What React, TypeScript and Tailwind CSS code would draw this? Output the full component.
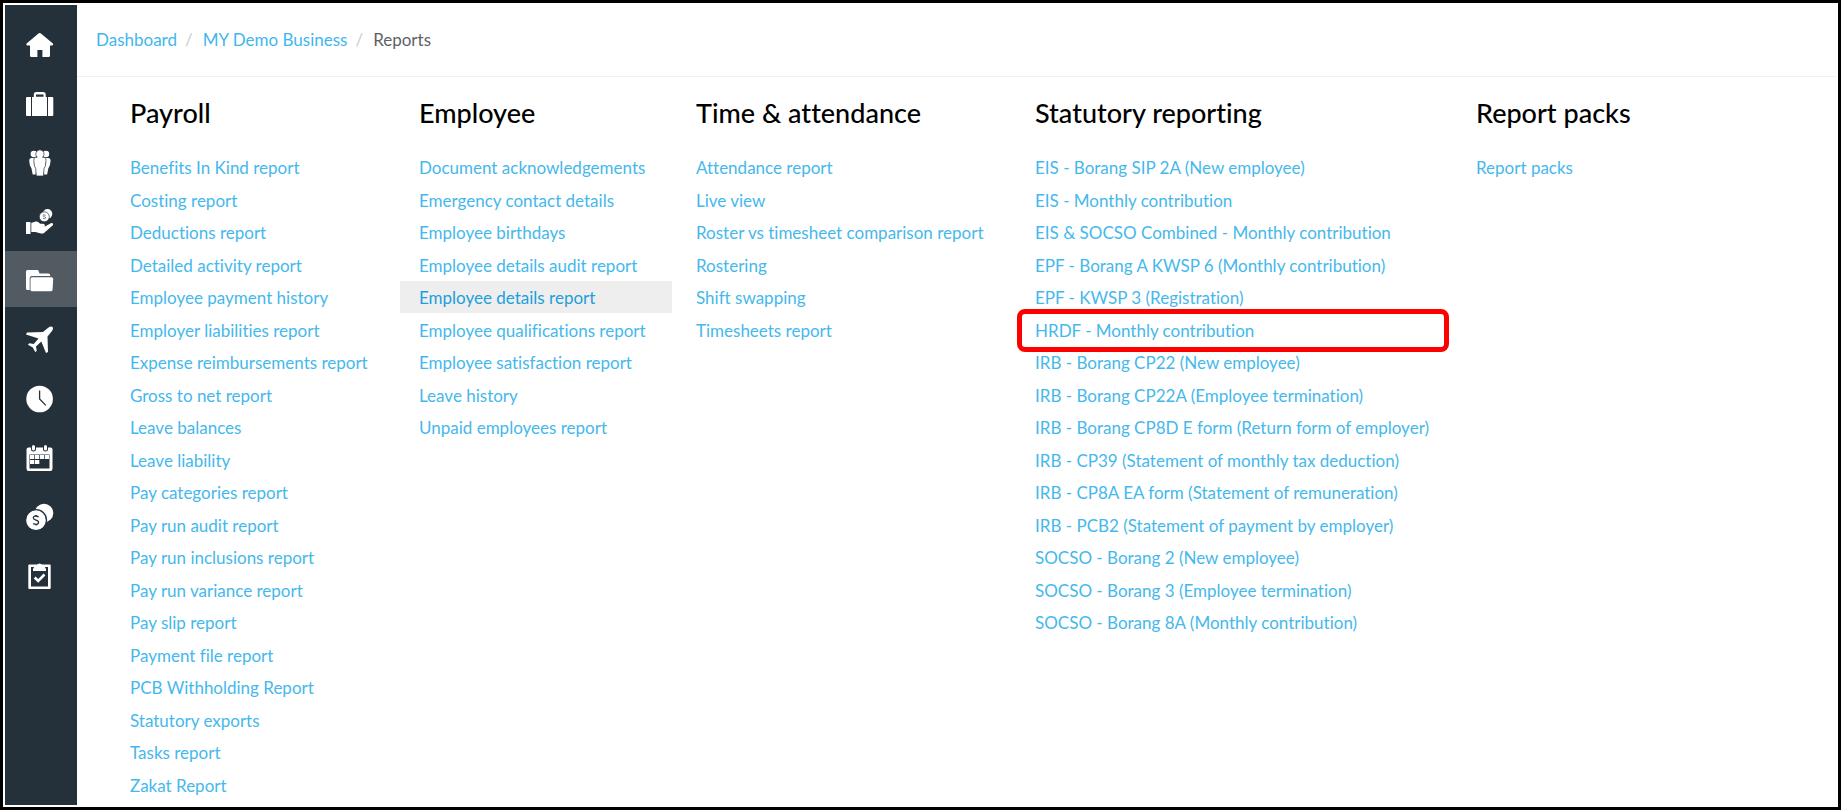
import React from 'react';

interface ReportGroup {
  title: string;
  reports: string[];
}

const ACTIVE_REPORT = 'Employee details report';
const MARKED_REPORT = 'HRDF - Monthly contribution';

const groups: ReportGroup[] = [
  {
    title: 'Payroll',
    reports: [
      'Benefits In Kind report',
      'Costing report',
      'Deductions report',
      'Detailed activity report',
      'Employee payment history',
      'Employer liabilities report',
      'Expense reimbursements report',
      'Gross to net report',
      'Leave balances',
      'Leave liability',
      'Pay categories report',
      'Pay run audit report',
      'Pay run inclusions report',
      'Pay run variance report',
      'Pay slip report',
      'Payment file report',
      'PCB Withholding Report',
      'Statutory exports',
      'Tasks report',
      'Zakat Report',
    ],
  },
  {
    title: 'Employee',
    reports: [
      'Document acknowledgements',
      'Emergency contact details',
      'Employee birthdays',
      'Employee details audit report',
      'Employee details report',
      'Employee qualifications report',
      'Employee satisfaction report',
      'Leave history',
      'Unpaid employees report',
    ],
  },
  {
    title: 'Time & attendance',
    reports: [
      'Attendance report',
      'Live view',
      'Roster vs timesheet comparison report',
      'Rostering',
      'Shift swapping',
      'Timesheets report',
    ],
  },
  {
    title: 'Statutory reporting',
    reports: [
      'EIS - Borang SIP 2A (New employee)',
      'EIS - Monthly contribution',
      'EIS & SOCSO Combined - Monthly contribution',
      'EPF - Borang A KWSP 6 (Monthly contribution)',
      'EPF - KWSP 3 (Registration)',
      'HRDF - Monthly contribution',
      'IRB - Borang CP22 (New employee)',
      'IRB - Borang CP22A (Employee termination)',
      'IRB - Borang CP8D E form (Return form of employer)',
      'IRB - CP39 (Statement of monthly tax deduction)',
      'IRB - CP8A EA form (Statement of remuneration)',
      'IRB - PCB2 (Statement of payment by employer)',
      'SOCSO - Borang 2 (New employee)',
      'SOCSO - Borang 3 (Employee termination)',
      'SOCSO - Borang 8A (Monthly contribution)',
    ],
  },
  {
    title: 'Report packs',
    reports: ['Report packs'],
  },
];

const navItems = [
  {
    label: 'Home',
    icon: (
      <path d="M12.8 2.3q.9-.7 1.8 0l12.3 10.3q.8 1.6-.6 2H24v9.9q0 1.5-1.5 1.5H16.400v-7h-5v7H5.500Q4 26 4 24.500v-9.900H1.200q-1.500-.4-.6-2z" />
    ),
  },
  {
    label: 'Business',
    icon: (
      <>
        <path d="M1 7h4v19H1q-1 0-1-1V8q0-1 1-1zM22 7h4.300q1 0 1 1v17q0 1-1 1H22z" />
        <path d="M6 7h1.800V4.500Q7.800 2 10.300 2h6.900q2.500 0 2.500 2.500V7H21v19H6zm4-.2h7.500V4.500H10z" />
      </>
    ),
  },
  {
    label: 'Employees',
    icon: (
      <>
        <circle cx="7.900" cy="5" r="3.300" />
        <circle cx="19.900" cy="5" r="3.300" />
        <path d="M5.200 9h4l-1 6 2 5-.5 5.500h-3L5.500 19.500Q3.200 16 3.200 11.500 3.200 9 5.200 9zM18.600 9h4q2 0 2 2.500 0 4.500-2.300 8l-1.200 6h-3l-.5-5.500 2-5z" />
        <path
          d="M13.900.8a4.300 4.300 0 0 1 2.700 7.500h1.600q2 .2 1.800 3l-.6 5.900-1.300 2-.6 7.800h-7.200l-.6-7.800-1.300-2-.6-5.900q-.2-2.800 1.800-3h1.600A4.300 4.300 0 0 1 13.900.8z"
          stroke="#25313a"
          strokeWidth=".7"
        />
      </>
    ),
  },
  {
    label: 'Pay run',
    icon: (
      <>
        <path d="M0 14h4.500v12H0zM5.300 15l4.200-1.500q1.800-.4 3.200 1l1.600 1.300h2.800q2.200.5 1.800 2l-.4 1 6.800-3.700q2.200-.2 1.800 1.800l-8.800 7.800q-1.500 1.200-3.500.8L9.500 24H5.300z" />
        <circle cx="21.500" cy="5.800" r="4.800" />
        <circle cx="18.300" cy="8.800" r="5" stroke="#25313a" strokeWidth=".7" />
        <path d="M19.700 7.300q-2.500-1.200-2.700.2 0 .9 1.300 1.200 1.500.4 1.400 1.300-.3 1.300-2.900.3" fill="none" stroke="#25313a" strokeWidth=".6" />
      </>
    ),
  },
  {
    label: 'Reports',
    icon: (
      <>
        <path d="M1.500 3h9.700q1.200 0 1.500 1.200L13.500 6.500h9q1.700 0 1.700 2V9H6Q3.700 9 3.700 11.300V23H1.500Q0 23 0 21.500v-17Q0 3 1.500 3z" />
        <path d="M6 10.300h19.500q1.700 0 1.700 1.700l-.6 10.500Q26.500 24.300 25 24.300H6q-1.500 0-1.500-1.500V11.800q0-1.500 1.500-1.500z" />
      </>
    ),
  },
  {
    label: 'Leave',
    icon: (
      <path d="M26.500 1q1.300 1.600-.7 4.300L21.500 10.500 22 26l-2 1-4.700-11.500L10 20.500l.7 4.500L9.200 26l-2.400-4.600L2 18.700l1.200-1.500 4.500.7 4.800-5.300L0 8.500 1 6.400 17 6l5.200-4.200Q25-.2 26.500 1z" />
    ),
  },
  {
    label: 'Time',
    icon: (
      <>
        <circle cx="13.600" cy="14" r="13.300" />
        <path d="M13.600 5.500V14l6.200 6.400" fill="none" stroke="#25313a" strokeWidth="1.300" />
      </>
    ),
  },
  {
    label: 'Rosters',
    icon: (
      <>
        <path
          fillRule="evenodd"
          d="M2.500 3.500H5V5q0 2.500 2.500 2.500T10 5V3.500h7V5q0 2.500 2.500 2.500T22 5V3.500h2.500Q26.500 3.500 26.500 5.500v19Q26.500 27 24.500 27h-22Q.5 27 .5 24.500v-19Q.5 3.500 2.500 3.500zM3.500 10.500v14h20v-14z"
        />
        <rect x="6" y="1" width="3" height="5.500" rx="1.500" />
        <rect x="18" y="1" width="3" height="5.500" rx="1.500" />
        <path d="M4 11h4.300v4H4zM9 11h4.300v4H9zM14 11h4.300v4H14zM19 11h4v4h-4zM4 16h4.300v4H4zM9 16h4.300v4H9z" />
      </>
    ),
  },
  {
    label: 'Expenses',
    icon: (
      <>
        <circle cx="18" cy="10" r="9.300" />
        <circle cx="10" cy="17.200" r="10.500" stroke="#25313a" strokeWidth="1.300" />
        <path d="M12.700 13.800q-5.200-2-5.400 1 0 1.500 2.700 2.300 2.800.8 2.600 2.500-.6 2.800-5.500 1M10 12v1.500M10 21v1.500" fill="none" stroke="#25313a" strokeWidth="1.300" />
      </>
    ),
  },
  {
    label: 'Tasks',
    icon: (
      <>
        <path
          fillRule="evenodd"
          d="M3.300 2.500h20.400q1 0 1 1V26q0 1-1 1H3.300q-1 0-1-1V3.500q0-1 1-1zM5 5v19.500h17V5z"
        />
        <path
          fillRule="evenodd"
          d="M7 9V7q.5-2.500 3.500-3Q10.900 1.500 13.500 1.500T16.500 4q3 .5 3.500 3v2zM12.600 3.300v1.500h1.800V3.300z"
        />
        <path d="M8.700 15.500l3.500 3.500 6.300-6.500" fill="none" stroke="#fff" strokeWidth="2.600" />
      </>
    ),
  },
];

function Sidebar() {
  return (
    <nav aria-label="Main" className="flex w-[72px] shrink-0 flex-col gap-[3px] bg-[#25313a] pt-[10px]">
      {navItems.map((item) => (
        <a
          key={item.label}
          href="#"
          aria-label={item.label}
          className={`flex h-14 items-center justify-center pt-1 pr-[2px] ${item.label === 'Reports' ? 'bg-[#515b61]' : ''}`}
        >
          <svg viewBox="0 0 28 28" className="h-7 w-7 overflow-visible fill-white">
            {item.icon}
          </svg>
        </a>
      ))}
    </nav>
  );
}

function Breadcrumb() {
  return (
    <header className="border-b border-[#f0f0f0] px-[19px] pt-[23px] pb-6">
      <ol className="flex gap-[10px] text-[17px] leading-6">
        <li className="flex gap-2">
          <a href="#" className="text-[#3fb7ee]">Dashboard</a>
          <span className="text-[#cccccc]">/</span>
        </li>
        <li className="flex gap-2">
          <a href="#" className="text-[#3fb7ee]">MY Demo Business</a>
          <span className="text-[#cccccc]">/</span>
        </li>
        <li className="text-[#5f5f68]">Reports</li>
      </ol>
    </header>
  );
}

function ReportColumn({ title, reports }: ReportGroup) {
  return (
    <section>
      <h2 className="px-[19px] text-[27px] leading-8 font-medium text-black">{title}</h2>
      <ul className="mt-[22px]">
        {reports.map((report) => (
          <li key={report} className="relative odd:h-8 even:h-[33px]">
            <a
              href="#"
              className={`flex h-full items-center px-[19px] pt-[2px] text-[17px] whitespace-nowrap ${
                report === ACTIVE_REPORT ? 'bg-[#eeeeee] text-[#1c9fdb]' : 'text-[#45b8ec]'
              }`}
            >
              {report}
            </a>
            {report === MARKED_REPORT && (
              <span className="pointer-events-none absolute -top-1 right-[3px] -bottom-[6px] left-px rounded-lg border-5 border-[#ff0000]" />
            )}
          </li>
        ))}
      </ul>
    </section>
  );
}

export default function App() {
  return (
    <div className="flex min-h-screen border-[3px] border-black bg-white p-[2px] font-['Lato',sans-serif] [font-variant-ligatures:none]">
      <Sidebar />
      <main className="min-w-0 flex-1">
        <Breadcrumb />
        <div className="grid grid-cols-[284px_272px_334px_436px_1fr] gap-x-[5px] pt-5 pl-[34px]">
          {groups.map((group) => (
            <ReportColumn key={group.title} {...group} />
          ))}
        </div>
      </main>
    </div>
  );
}
